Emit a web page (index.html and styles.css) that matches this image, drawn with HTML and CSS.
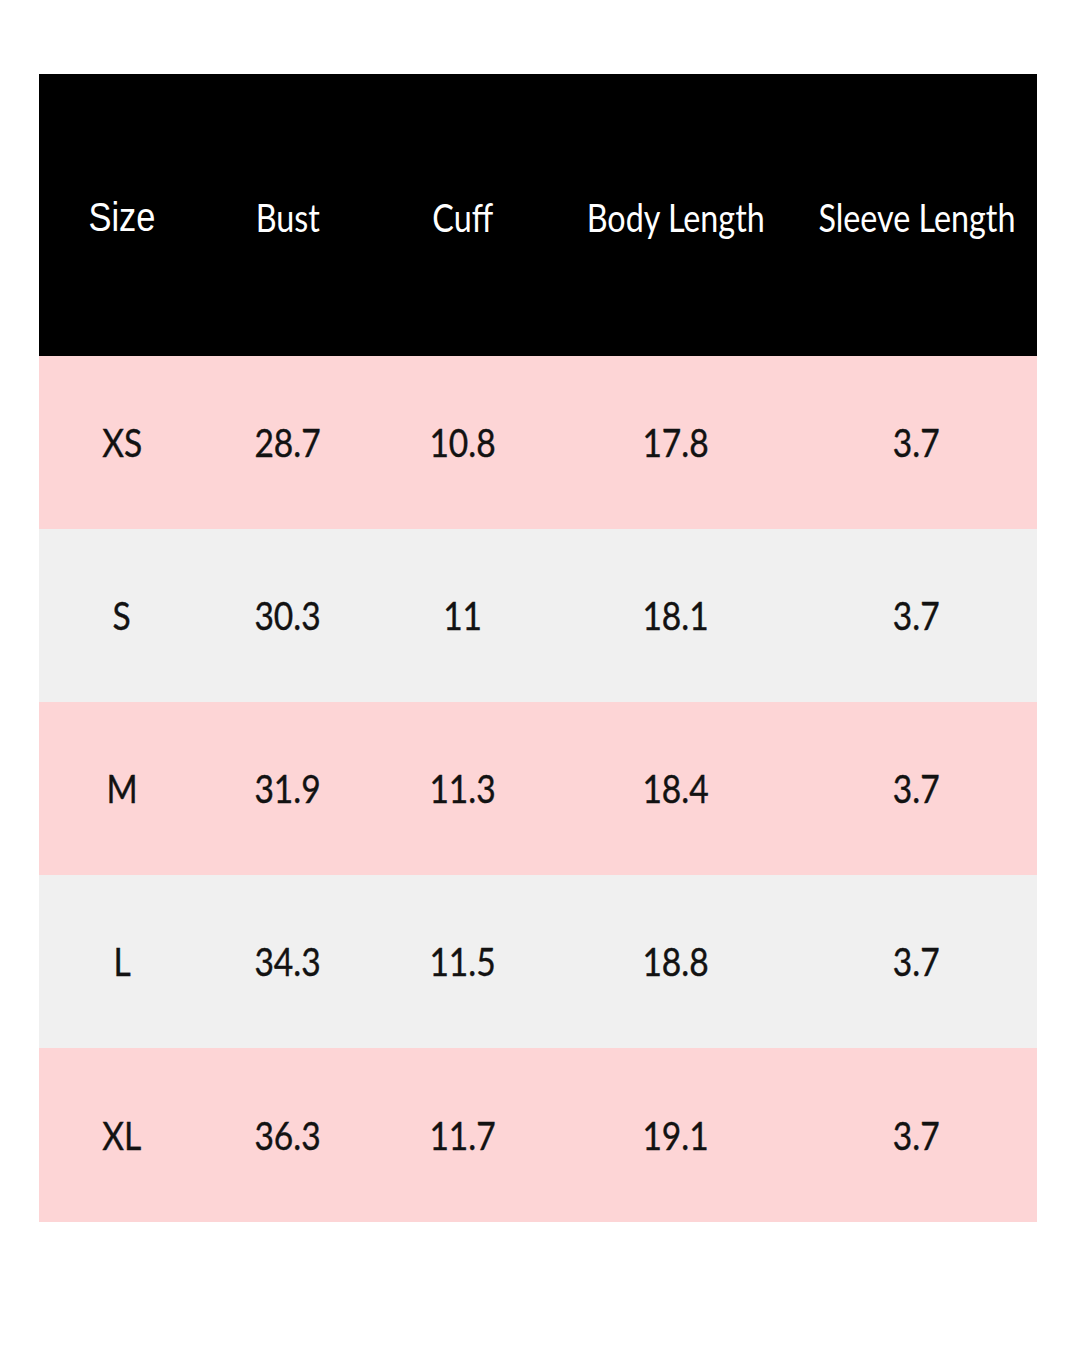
FILE: index.html
```html
<!DOCTYPE html>
<html>
<head>
<meta charset="utf-8">
<link rel="stylesheet" href="styles.css">
</head>
<body>
<div class="page">
  <div class="table">
    <div class="row head">
      <div class="cell"><span class="t size">Size</span></div>
      <div class="cell"><span class="t">Bust</span></div>
      <div class="cell"><span class="t">Cuff</span></div>
      <div class="cell"><span class="t">Body Length</span></div>
      <div class="cell"><span class="t">Sleeve Length</span></div>
    </div>
    <div class="row pink">
      <div class="cell"><span class="t">XS</span></div>
      <div class="cell"><span class="t">28.7</span></div>
      <div class="cell"><span class="t">10.8</span></div>
      <div class="cell"><span class="t">17.8</span></div>
      <div class="cell"><span class="t">3.7</span></div>
    </div>
    <div class="row gray">
      <div class="cell"><span class="t">S</span></div>
      <div class="cell"><span class="t">30.3</span></div>
      <div class="cell"><span class="t">11</span></div>
      <div class="cell"><span class="t">18.1</span></div>
      <div class="cell"><span class="t">3.7</span></div>
    </div>
    <div class="row pink">
      <div class="cell"><span class="t">M</span></div>
      <div class="cell"><span class="t">31.9</span></div>
      <div class="cell"><span class="t">11.3</span></div>
      <div class="cell"><span class="t">18.4</span></div>
      <div class="cell"><span class="t">3.7</span></div>
    </div>
    <div class="row gray">
      <div class="cell"><span class="t">L</span></div>
      <div class="cell"><span class="t">34.3</span></div>
      <div class="cell"><span class="t">11.5</span></div>
      <div class="cell"><span class="t">18.8</span></div>
      <div class="cell"><span class="t">3.7</span></div>
    </div>
    <div class="row pink last">
      <div class="cell"><span class="t">XL</span></div>
      <div class="cell"><span class="t">36.3</span></div>
      <div class="cell"><span class="t">11.7</span></div>
      <div class="cell"><span class="t">19.1</span></div>
      <div class="cell"><span class="t">3.7</span></div>
    </div>
  </div>
</div>
</body>
</html>
```

FILE: styles.css
```css
html, body {
  margin: 0;
  padding: 0;
  background: #ffffff;
}

.page {
  width: 1080px;
  height: 1350px;
  padding: 74px 0 0 39px;
  box-sizing: border-box;
}

.table {
  width: 998px;
  display: flex;
  flex-direction: column;
}

.row {
  display: grid;
  grid-template-columns: 166px 165px 186px 240px 241px;
  height: 173px;
  color: #121212;
}

.row.last {
  height: 174px;
}

.row.head {
  height: 282px;
  background: #000000;
  color: #ffffff;
}

.row.pink {
  background: #fdd5d6;
}

.row.gray {
  background: #f0f0f0;
}

.cell {
  display: flex;
  align-items: center;
  justify-content: center;
}

.t {
  display: inline-block;
  font-family: Lato, "Open Sans", sans-serif;
  font-size: 39px;
  line-height: 1;
  white-space: nowrap;
  transform: scaleX(0.86);
  -webkit-text-stroke: 0.4px currentColor;
}

.head .t {
  font-size: 38px;
  margin-top: 4px;
  transform: scaleX(0.85);
  -webkit-text-stroke: 0;
}

.head .t.size {
  font-family: "Liberation Sans", Arial, sans-serif;
  font-size: 40px;
  transform: scaleX(0.86);
}
```
